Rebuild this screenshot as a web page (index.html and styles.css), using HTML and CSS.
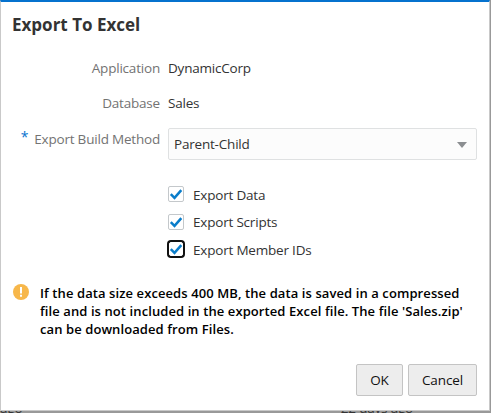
FILE: index.html
```html
<!DOCTYPE html>
<html lang="en">
<head>
<meta charset="utf-8">
<title>Export To Excel</title>
<link rel="stylesheet" href="styles.css">
</head>
<body>
<main class="dialog">
  <h1 class="title">Export To Excel</h1>
  <div class="form">
    <div class="row"><span class="label">Application</span><span class="value">DynamicCorp</span></div>
    <div class="row"><span class="label">Database</span><span class="value">Sales</span></div>
    <div class="row row-select">
      <span class="label"><span class="required">*</span>Export Build Method</span>
      <div class="select"><span>Parent-Child</span>
        <svg width="10" height="6" viewBox="0 0 10 6"><path d="M0 0h10L5 6z" fill="#8b8e91"/></svg>
      </div>
    </div>
  </div>
  <div class="checks">
    <label class="check"><span class="box"><svg width="14" height="14" viewBox="0 0 14 14"><path d="M1.8 7.2 5.5 10.9 12.3 3.2"/></svg></span><span>Export Data</span></label>
    <label class="check"><span class="box"><svg width="14" height="14" viewBox="0 0 14 14"><path d="M1.8 7.2 5.5 10.9 12.3 3.2"/></svg></span><span>Export Scripts</span></label>
    <label class="check"><span class="box focused"><svg width="14" height="14" viewBox="0 0 14 14"><path d="M1.8 7.2 5.5 10.9 12.3 3.2"/></svg></span><span>Export Member IDs</span></label>
  </div>
  <div class="notice">
    <svg width="16" height="16" viewBox="0 0 16 16"><circle cx="8" cy="8" r="8" fill="#f7b74a"/><path d="M7 3h2v6.5H7zM7 10.8h2v2H7z" fill="#fff"/></svg>
    <p>If the data size exceeds 400 MB, the data is saved in a compressed<br>file and is not included in the exported Excel file. The file 'Sales.zip'<br>can be downloaded from Files.</p>
  </div>
  <div class="actions"><button class="ok">OK</button><button class="cancel">Cancel</button></div>
</main>
<div class="behind"><span>ago</span><span>22 days ago</span></div>
</body>
</html>
```
FILE: styles.css
```css
* { box-sizing: border-box; }
body {
  margin: 0;
  width: 491px;
  height: 413px;
  overflow: hidden;
  background: #999;
  font: 13.5px/18px "Open Sans", "Noto Sans", sans-serif;
  letter-spacing: -0.2px;
  color: #333;
  white-space: nowrap;
}
.dialog {
  width: 490px;
  height: 411px;
  background: #fff;
  border: 1px solid #c9c9c9;
  border-top: 2px solid #0572ce;
}
.title {
  margin: 0;
  padding: 11px 0 0 11px;
  font-size: 17px;
  line-height: 24px;
  font-weight: 700;
  letter-spacing: 0;
}
.form { padding-top: 22px; }
.row { display: flex; height: 35px; }
.label { width: 159px; text-align: right; color: #737373; }
.value { margin-left: 8px; }
.row-select { height: 33px; }
.row-select .label { padding-top: 1px; }
.required { color: #0572ce; margin-right: 6px; font-size: 14px; line-height: 10px; vertical-align: 2px; }
.select {
  display: flex;
  align-items: center;
  justify-content: space-between;
  width: 309px;
  height: 32px;
  margin: -1px 0 0 8px;
  padding: 0 9px 0 5px;
  border: 1px solid #dfe1e2;
  border-radius: 2px;
  background: #fcfcfc;
  letter-spacing: -0.2px;
}
.select svg { margin-top: 2px; }
.checks { display: grid; grid-template-rows: 28px 27px 28px; padding: 18px 0 0 167px; }
.check { display: flex; align-items: center; gap: 9px; }
.check > span:last-child { padding-top: 1px; }
.box {
  display: block;
  width: 16px;
  height: 16px;
  border: 1px solid #c4c8cb;
  border-radius: 2px;
  background: #fff;
}
.box svg { display: block; fill: none; stroke: #0a7dca; stroke-width: 2.5; }
.box.focused { border-color: #fff; box-shadow: 0 0 0 2px #111; width: 14px; height: 14px; margin: 1px; }
.box.focused svg { margin: -1px; }
.notice { display: flex; gap: 11px; padding: 21px 0 0 12px; color: #000; }
.notice p { margin: 0; font-weight: 600; font-size: 13px; letter-spacing: 0.09px; }
.actions { display: flex; justify-content: flex-end; gap: 5px; padding: 26px 12px 0 0; }
.actions button {
  height: 32px;
  padding: 0;
  border: 1px solid #c4c4c4;
  border-radius: 2px;
  background: #ededed;
  font: inherit;
  letter-spacing: -0.1px;
  color: #111;
}
.ok { width: 47px; }
.cancel { width: 69px; }
.behind {
  display: flex;
  justify-content: space-between;
  height: 2px;
  padding-right: 78px;
  overflow: hidden;
  font-size: 13.5px;
}
.behind span { margin-top: -12px; }
```
